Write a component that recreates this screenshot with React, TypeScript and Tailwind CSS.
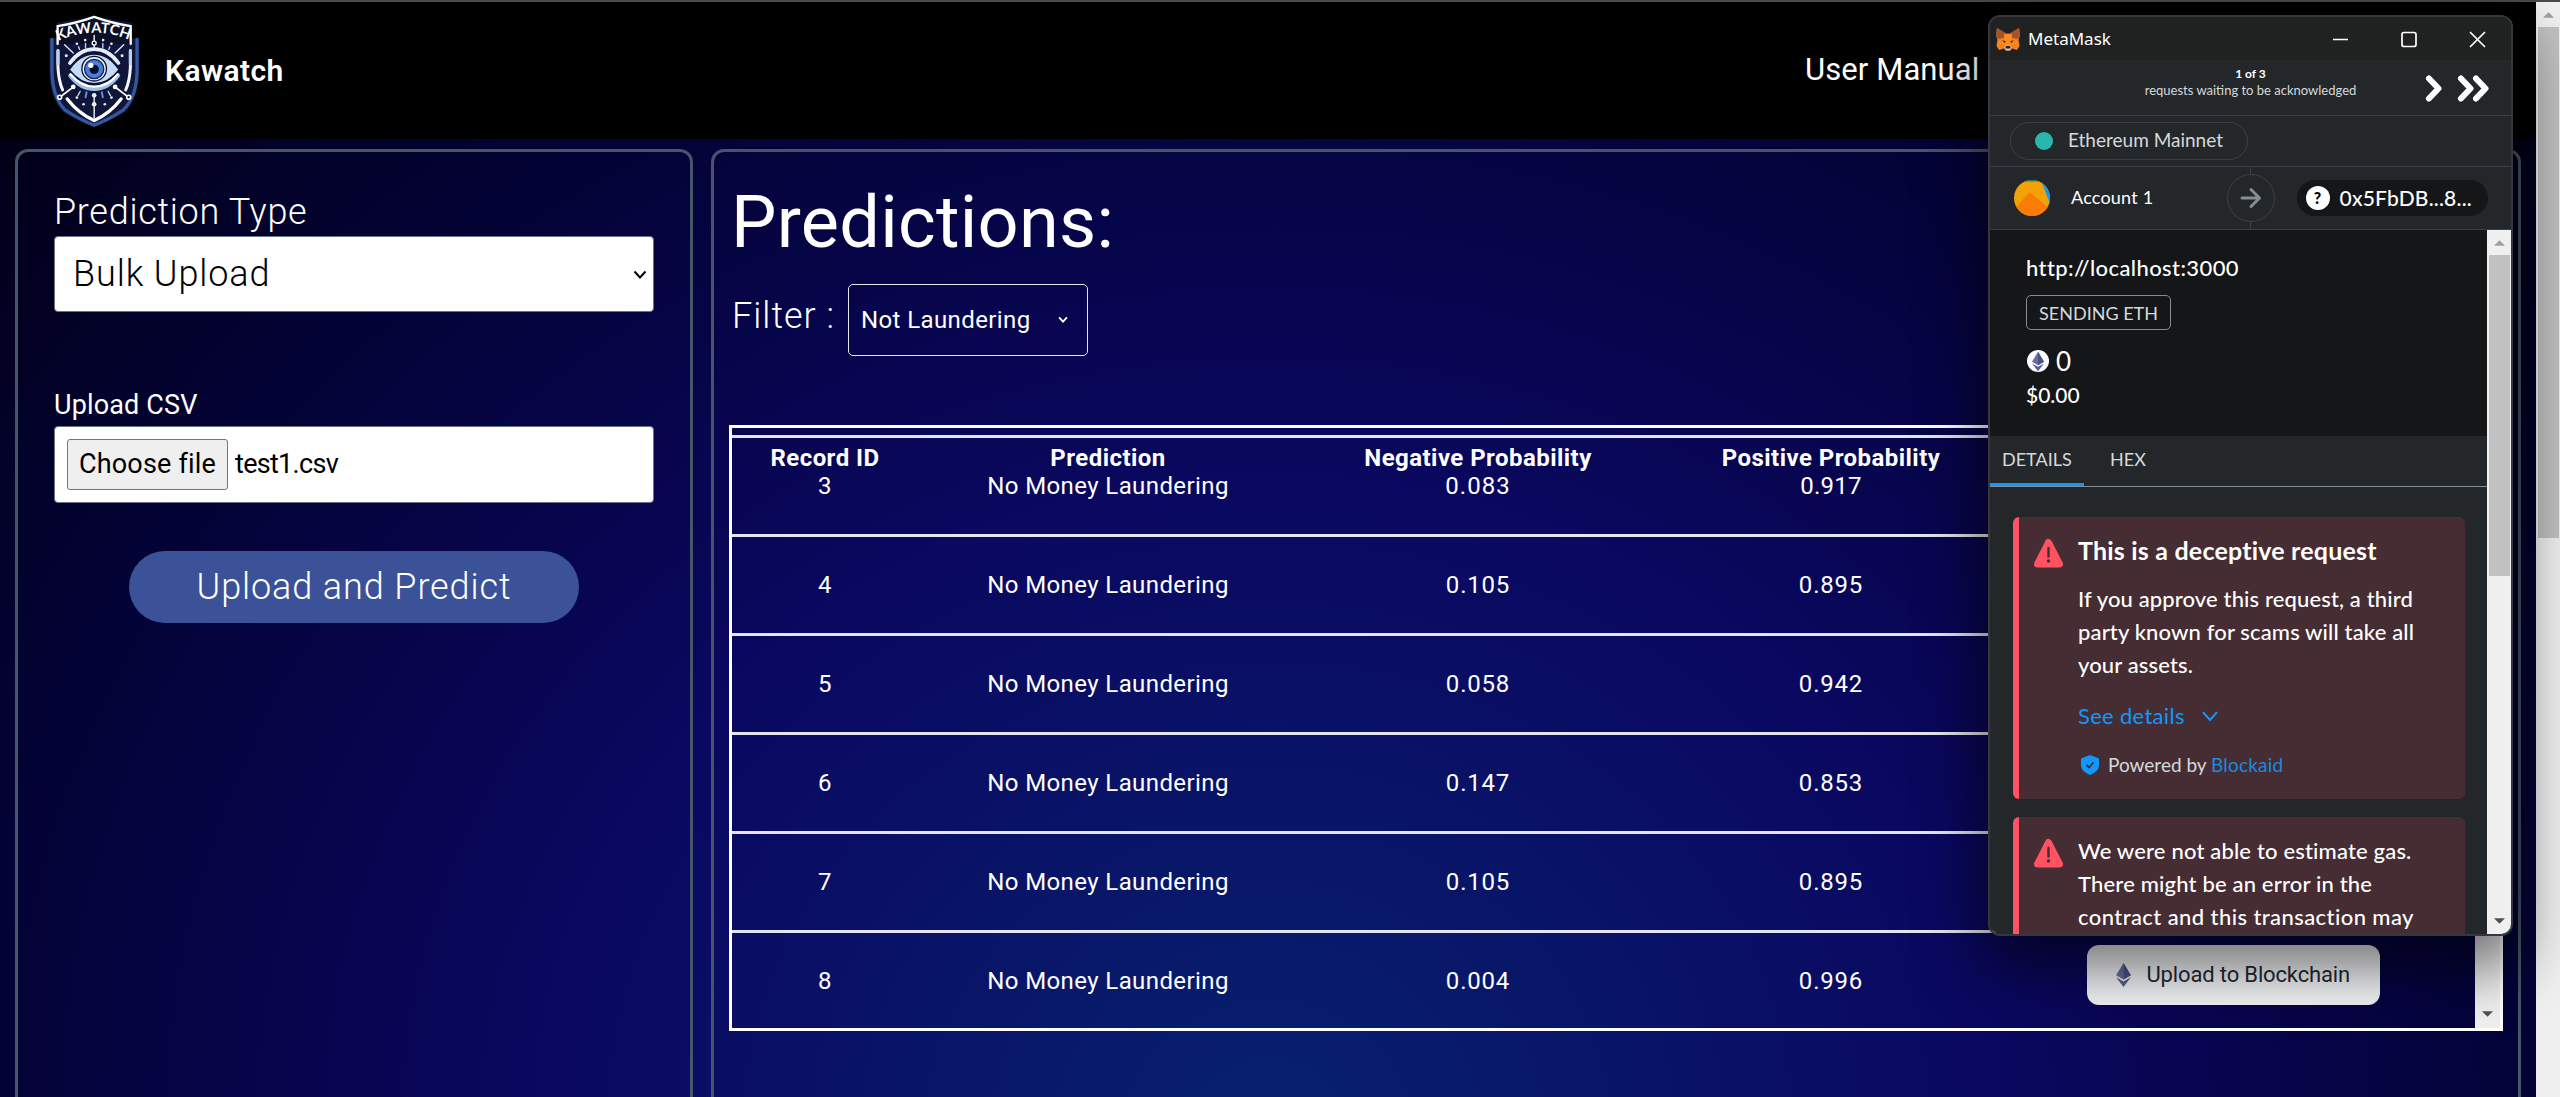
import React from "react";

const rows = [
  { id: 4, neg: "0.105", pos: "0.895" },
  { id: 5, neg: "0.058", pos: "0.942" },
  { id: 6, neg: "0.147", pos: "0.853" },
  { id: 7, neg: "0.105", pos: "0.895" },
  { id: 8, neg: "0.004", pos: "0.996" },
];

const cols = "grid grid-cols-[186px_380px_360px_346px_458px]";

function Logo() {
  return (
    <svg viewBox="54 40 280 342" className="h-[114px] w-[93px]" fill="none" strokeLinecap="round">
      <path d="M80 66 L193 46 L306 66 V112 H328 V215 Q326 296 285 335 Q235 364 193 378 Q150 364 101 335 Q60 296 58 215 V112 H80Z" fill="#10163a" />
      <path d="M66 116 V215 Q68 290 105 328 Q150 358 193 374 Q236 358 281 328 Q320 290 322 215 V116" stroke="#34579f" strokeWidth="10" />
      <path d="M84 150 V200 Q86 240 98 268 M302 150 V200 Q300 240 288 268" stroke="#f4f7ff" strokeWidth="9" />
      <path d="M84 150 V190 M302 150 V190" stroke="#b9d2f4" strokeWidth="9" />
      <path d="M112 295 Q145 338 193 360 Q241 338 274 295" stroke="#fff" strokeWidth="10" />
      <path d="M83 130 V76 Q140 67 193 48 Q246 67 303 76 V130" fill="#0b1026" stroke="#fff" strokeWidth="7" />
      <path d="M104 132 L130 157 M282 132 L256 157" stroke="#e7eefb" strokeWidth="4" />
      <path d="M193 104 V120 M193 134 V143 M193 290 V352" stroke="#fff" strokeWidth="4" />
      <circle cx="193" cy="127" r="6" stroke="#fff" strokeWidth="4" />
      <g fill="#e7eefb">
        <circle cx="166" cy="118" r="4" /><circle cx="220" cy="118" r="4" />
        <circle cx="141" cy="129" r="4" /><circle cx="245" cy="129" r="4" />
        <circle cx="109" cy="165" r="4.500" /><circle cx="277" cy="165" r="4.500" />
        <circle cx="193" cy="284" r="7" /><circle cx="193" cy="311" r="7" />
        <circle cx="161" cy="311" r="4" /><circle cx="225" cy="311" r="4" />
        <circle cx="141" cy="291" r="4" /><circle cx="245" cy="291" r="4" />
      </g>
      <path d="M167 128 V142 M219 128 V142 M146 138 L149 146 M240 138 L237 146 M144 285 L151 272 M242 285 L235 272" stroke="#c5d6f2" strokeWidth="4" />
      <path d="M170 275 L167 290 M216 275 L219 290" stroke="#5f8be0" strokeWidth="6" />
      <path d="M120 187 Q150 145 193 145 Q236 145 266 187" stroke="#e4edfb" strokeWidth="11" />
      <path d="M122 225 Q152 264 193 264 Q234 264 264 225" stroke="#9ebfee" strokeWidth="14" />
      <path d="M122 221 Q152 258 193 258 Q234 258 264 221" stroke="#fff" strokeWidth="7" />
      <path d="M118 207 Q150 160 193 160 Q236 160 268 207 Q236 249 193 249 Q150 249 118 207Z" fill="#c3daf8" stroke="#0c1230" strokeWidth="4" />
      <circle cx="193" cy="204" r="37" fill="#eaf2fd" stroke="#0c1230" strokeWidth="4" />
      <circle cx="193" cy="205" r="29" fill="#4c7dd8" stroke="#14235a" strokeWidth="4" />
      <circle cx="193" cy="206" r="14" fill="#0a1130" />
      <circle cx="183" cy="194" r="8" fill="#fff" />
      <path d="M91 289 L129 260 M295 289 L257 260" stroke="#fff" strokeWidth="5" />
      <circle cx="130" cy="259" r="7" fill="#fff" /><circle cx="256" cy="259" r="7" fill="#fff" />
      <circle cx="89" cy="290" r="6" fill="#10163a" stroke="#fff" strokeWidth="5" />
      <circle cx="297" cy="290" r="6" fill="#10163a" stroke="#fff" strokeWidth="5" />
      <path id="crest" d="M84 121 Q193 72 303 119" />
      <text fill="#fff" className="font-['Lato'] text-[44px] font-bold">
        <textPath href="#crest" textLength="220">KAWATCH</textPath>
      </text>
    </svg>
  );
}

function Fox() {
  return (
    <svg viewBox="0 0 24 24" className="h-6 w-6">
      <path d="M1 1 L10 6.500 H14 L23 1 L24 8 L22.500 13 L23.500 19 L21 23 L16 21.500 L13.500 23.500 H10.500 L8 21.500 L3 23 L.5 19 L1.500 13 L0 8Z" fill="#f0831f" />
      <path d="M1 1 L10 6.500 L8 11 L2 12 L0 8Z M23 1 L14 6.500 L16 11 L22 12 L24 8Z" fill="#a2532a" />
      <path d="M8 7 H16 L15 20 H9Z" fill="#fa8a22" />
      <path d="M1.500 14 L7 13 L8 18 L1 18.500Z M22.500 14 L17 13 L16 18 L23 18.500Z" fill="#f8861d" />
      <path d="M6 13.500 L9.500 14 L9 16Z M18 13.500 L14.500 14 L15 16Z" fill="#3b2a25" />
      <path d="M8 20 L10 18.500 H14 L16 20 L14.500 23.500 H9.500Z" fill="#d5c4b5" />
      <path d="M9.700 19 H14.300 L14.500 21.500 H9.500Z" fill="#2c2320" />
    </svg>
  );
}

function Diamond({ className }: { className: string }) {
  return (
    <svg viewBox="0 0 16 26" className={className}>
      <path d="M8 0 L16 13.300 L8 18 L0 13.300Z" fill="#6a6f9e" />
      <path d="M8 0 L16 13.300 L8 18Z" fill="#4c5285" />
      <path d="M0 15.500 L8 20 L16 15.500 L8 26Z" fill="#5a5f92" />
    </svg>
  );
}

function Warning() {
  return (
    <svg viewBox="0 0 29 30" className="h-[30px] w-[29px] shrink-0">
      <path d="M14.500 4.500 L25.500 26 H3.500Z" fill="#ff5263" stroke="#ff5263" strokeWidth="7" strokeLinejoin="round" />
      <path d="M14.500 10 V18.500" stroke="#462d33" strokeWidth="2.400" strokeLinecap="round" />
      <circle cx="14.500" cy="23" r="1.700" fill="#462d33" />
    </svg>
  );
}

function Chevron({ className }: { className: string }) {
  return (
    <svg viewBox="0 0 14 9" className={className} fill="none" stroke="currentColor">
      <path d="M1.500 1.500 L7 7.500 L12.500 1.500" />
    </svg>
  );
}

function Arrow({ down = false, className }: { down?: boolean; className: string }) {
  return (
    <svg viewBox="0 0 12 6" className={className}>
      <path d={down ? "M0 0 H12 L6 6Z" : "M0 6 H12 L6 0Z"} fill="currentColor" />
    </svg>
  );
}

function LeftPanel() {
  return (
    <section className="flex w-[678px] shrink-0 flex-col rounded-t-[13px] border-[3px] border-b-0 border-[#475569] px-9 pt-[30px]">
      <label className="h-[54px] text-4xl leading-[60px]! font-light tracking-[0.7px]">Prediction Type</label>
      <div className="flex h-[76px] items-center justify-between rounded-[4px] border border-[#6b7280] bg-white pr-[6px] pl-[18px] text-4xl font-light tracking-[0.9px] text-black">
        Bulk Upload
        <Chevron className="h-[9px] w-[14px] stroke-2" />
      </div>
      <label className="mt-[70px] h-11 text-[27px] leading-[46px] tracking-[0.15px]">Upload CSV</label>
      <div className="flex h-[77px] items-center rounded-[4px] border border-[#6b7280] bg-white pl-3 text-[27px] text-black">
        <span className="flex h-[51px] w-[161px] items-center justify-center rounded-[3px] border border-[#767676] bg-[#efefef] tracking-[0.2px]">
          Choose file
        </span>
        <span className="ml-[7px] tracking-[-0.7px]">test1.csv</span>
      </div>
      <button className="mt-12 flex h-[72px] w-[450px] items-center justify-center self-center rounded-full bg-[#3b5299] pb-[1px] text-4xl font-light tracking-[0.9px]">
        Upload and Predict
      </button>
    </section>
  );
}

function UploadButton() {
  return (
    <button className="-mt-[11px] flex h-[60px] w-[293px] items-center rounded-xl bg-[#f3f4f6] pl-[29px] text-[#1f2937]">
      <Diamond className="h-6 w-[15px]" />
      <span className="ml-[16px] text-[22px] tracking-[-0.15px]">Upload to Blockchain</span>
    </button>
  );
}

function RightPanel() {
  return (
    <section className="flex w-[1810px] shrink-0 flex-col rounded-t-[13px] border-[3px] border-b-0 border-[#475569] px-[15px] pt-[17px]">
      <h1 className="h-[108px] pl-[2px] text-[72px] leading-[108px] tracking-[0.3px]">Predictions:</h1>
      <div className="mt-[7px] flex h-[72px]">
        <span className="w-[119px] pl-[3px] text-4xl leading-[64px]! font-light tracking-[1px]">Filter :</span>
        <div className="flex w-60 items-center justify-between rounded-[5px] border-[1.5px] border-[#e5e7eb] pr-[19px] pl-[12px] pb-[1px] text-2xl tracking-[0.4px]">
          Not Laundering
          <Chevron className="h-[7px] w-[10px] stroke-[2.6]" />
        </div>
      </div>
      <div className="mt-[69px] flex h-[606px] border-[3px] border-white">
        <div className="w-[1743px] pt-[7px] text-2xl">
          <div className="h-[102px] border-y-[3px] border-[#e4e4ee] pt-[6px] text-center leading-[28px]!">
            <div className={`${cols} font-bold tracking-[0.45px] leading-7`}>
              <span>Record ID</span>
              <span>Prediction</span>
              <span>Negative Probability</span>
              <span>Positive Probability</span>
            </div>
            <div className={`${cols} tracking-[0.4px] leading-7`}>
              <span>3</span>
              <span>No Money Laundering</span>
              <span className="tracking-[1px]">0.083</span>
              <span className="tracking-[0.2px]">0.917</span>
            </div>
          </div>
          {rows.map((r) => (
            <div key={r.id} className={`${cols} h-[99px] items-center justify-items-center border-b-[3px] border-[#e4e4ee] tracking-[0.4px] last:border-b-0 last:pb-[4px]`}>
              <span>{r.id}</span>
              <span>No Money Laundering</span>
              <span className="tracking-[0.8px]">{r.neg}</span>
              <span className="tracking-[0.8px]">{r.pos}</span>
              <UploadButton />
            </div>
          ))}
        </div>
        <div className="flex w-[25px] flex-col items-center justify-end bg-[#f0f0f0] pb-[11px] text-[#505050]">
          <Arrow down className="h-[6px] w-[11px]" />
        </div>
      </div>
    </section>
  );
}

function WalletWindow() {
  return (
    <div className="absolute top-[15px] left-[1988px] flex h-[921px] w-[525px] flex-col overflow-hidden rounded-xl border-2 border-[#36363f] bg-[#24272a] bg-clip-padding font-['Lato'] text-white shadow-[0_24px_60px_8px_rgba(0,0,0,0.55)]">
      <div className="flex h-[43px] shrink-0 items-center bg-[#202221] pl-[6px]">
        <Fox />
        <span className="ml-2 grow font-['Noto_Sans'] text-[17px]">MetaMask</span>
        <svg viewBox="0 0 154 18" className="mr-[25px] h-[18px] w-[154px]" fill="none" stroke="#fff" strokeWidth="1.700">
          <path d="M1 9.500 H16 M138 2 L153 17 M153 2 L138 17" />
          <rect x="70" y="2.500" width="14" height="14" rx="2" />
        </svg>
      </div>
      <div className="grid h-14 shrink-0 grid-cols-[1fr_auto_1fr] border-b border-[#3b4046] text-center text-[13px]">
        <span />
        <div className="pt-[6px] leading-4">
          <p className="text-xs leading-4! font-bold">1 of 3</p>
          <p className="text-[#d6d9dc]">requests waiting to be acknowledged</p>
        </div>
        <svg viewBox="0 0 75 40" className="mt-2 mr-4 h-10 w-[75px] justify-self-end" fill="none" stroke="#fff" strokeWidth="6" strokeLinejoin="round" strokeLinecap="round">
          <path d="M9 10.500 L18.500 20.500 L9 30.500 M41 10.500 L50.500 20.500 L41 30.500 M56 10.500 L65.500 20.500 L56 30.500" />
        </svg>
      </div>
      <div className="flex h-[51px] shrink-0 items-center border-b border-[#3b4046] pl-5">
        <div className="flex h-[38px] w-[238px] items-center rounded-full border border-[#3b4046] pl-6 text-[19px] text-[#d6d9dc]">
          <span className="h-[18px] w-[18px] rounded-full bg-[#29b6af]" />
          <span className="ml-[15px] pb-[2px]">Ethereum Mainnet</span>
        </div>
      </div>
      <div className="grid h-[63px] shrink-0 grid-cols-[1fr_48px_1fr] items-center border-b border-[#3b4046]">
        <div className="flex items-center pl-6">
          <svg viewBox="0 0 36 36" className="h-9 w-9 rounded-full">
            <rect width="36" height="36" fill="#f3a205" />
            <path d="M10 0 H28 V1.500 H10Z" fill="#1c7a70" />
            <path d="M27 0 H36 V24Z" fill="#1598f2" />
            <path d="M16 12 L38 31 V36 H0 V29Z" fill="#fb7c04" />
          </svg>
          <span className="ml-[21px] pb-[2px] text-lg tracking-[0.2px]">Account 1</span>
        </div>
        <div className="flex flex-col items-center">
          <span className="h-[7px] w-px bg-[#3b4046]" />
          <div className="flex h-12 w-12 items-center justify-center rounded-full border border-[#3b4046]">
            <svg viewBox="0 0 22 22" className="h-[22px] w-[22px]" fill="none" stroke="#848c96" strokeWidth="3" strokeLinejoin="round" strokeLinecap="round">
              <path d="M2 11 H19.500 M11 2.500 L19.500 11 L11 19.500" />
            </svg>
          </div>
          <span className="h-[7px] w-px bg-[#3b4046]" />
        </div>
        <div className="ml-[22px] flex h-9 w-[191px] items-center rounded-full bg-[#141618] pl-[9px]">
          <span className="flex h-6 w-6 items-center justify-center rounded-full bg-white text-base font-black text-black">?</span>
          <span className="ml-[10px] pb-[1px] text-[21px] font-medium tracking-[0.2px]">0x5FbDB...8...</span>
        </div>
      </div>
      <div className="flex min-h-0 grow">
        <div className="w-[497px] overflow-hidden">
          <div className="h-[206px] bg-[#141618] pt-[21px] pl-9">
            <p className="text-[22px] leading-[33px] font-medium tracking-[0.4px]">http://localhost:3000</p>
            <span className="mt-[11px] flex h-[35px] w-[145px] items-center justify-center rounded-[5px] border border-[#848c96] text-lg text-[#d6d9dc]">
              SENDING ETH
            </span>
            <div className="mt-[15px] flex h-8 items-center text-[26px]">
              <span className="ml-[1px] flex h-[22px] w-[22px] items-center justify-center rounded-full bg-white">
                <Diamond className="h-[21px] w-[12px]" />
              </span>
              <span className="ml-[7px]">0</span>
            </div>
            <p className="mt-px text-[21px] leading-[33px] font-medium">$0.00</p>
          </div>
          <div className="flex h-[51px] border-b border-[#848c96] text-lg leading-[47px]! text-[#d6d9dc]">
            <span className="w-[94px] border-b-[3px] border-[#1098fc] pl-3 leading-[47px]">DETAILS</span>
            <span className="pl-[26px] leading-[47px]">HEX</span>
          </div>
          <div className="flex flex-col gap-[18px] pt-[30px] pl-[23px] text-[22px] leading-[33px]! font-medium">
            <div className="flex h-[282px] w-[452px] rounded-[6px] border-l-[6px] border-[#ff5263] bg-[#462d33] pl-[15px]">
              <div className="pt-[21px]"><Warning /></div>
              <div className="pt-[15px] pl-[15px] whitespace-nowrap">
                <p className="text-[25px] leading-9! font-bold tracking-[0.2px]">This is a deceptive request</p>
                <p className="mt-[14px] leading-[33px] tracking-[0.13px]">
                  If you approve this request, a third
                  <br />
                  <span className="tracking-[0.14px]">party known for scams will take all</span>
                  <br />
                  your assets.
                </p>
                <p className="mt-[18px] flex items-center leading-[33px] font-normal tracking-[0.3px] text-[#1098fc]">
                  See details
                  <Chevron className="ml-4 h-3 w-[18px] stroke-[1.6]" />
                </p>
                <p className="mt-[19px] flex items-center text-[19px] leading-7! font-normal text-[#d6d9dc]">
                  <svg viewBox="0 0 18 20" className="mr-[9px] ml-[3px] h-5 w-[18px]">
                    <path d="M9 0 L18 3.500 V11 Q17 17 9 20 Q1 17 0 11 V3.500Z" fill="#1098fc" />
                    <path d="M5.500 10 L8 12.500 L12.500 7.500" fill="none" stroke="#462d33" strokeWidth="1.800" />
                  </svg>
                  Powered by&nbsp;<span className="tracking-[0.2px] text-[#1a8ae0]">Blockaid</span>
                </p>
              </div>
            </div>
            <div className="flex h-[200px] w-[452px] shrink-0 rounded-[6px] border-l-[6px] border-[#ff5263] bg-[#462d33] pl-[15px]">
              <div className="pt-[21px]"><Warning /></div>
              <p className="pt-[17px] pl-[15px] leading-[33px] tracking-[0.17px] whitespace-nowrap">
                We were not able to estimate gas.
                <br />
                There might be an error in the
                <br />
                <span className="tracking-[0.42px]">contract and this transaction may</span>
              </p>
            </div>
          </div>
        </div>
        <div className="flex w-6 flex-col items-center bg-[#f0f0f0] pt-[10px] pb-[10px]">
          <Arrow className="h-[6px] w-[11px] text-[#a0a0a0]" />
          <span className="mt-[9px] h-[321px] w-[21px] bg-[#c1c1c1]" />
          <Arrow down className="mt-auto h-[6px] w-[11px] text-[#505050]" />
        </div>
      </div>
    </div>
  );
}

export default function App() {
  return (
    <div className="relative flex h-[1097px] w-[2560px] flex-col overflow-hidden bg-black font-['Roboto',sans-serif] text-white">
      <div className="h-[2px] shrink-0 bg-[#4a4a4a]" />
      <div className="flex min-h-0 grow">
        <main className="flex w-[2536px] flex-col bg-[radial-gradient(1793px_1595px_at_1268px_1126px,#07216f_0%,#0a0860_40%,#07054c_55%,#040338_70%,#010018_94%)]">
          <header className="flex h-[137px] shrink-0 items-center bg-black pl-12">
            <Logo />
            <span className="ml-[24px] w-[118px] text-[30px] font-semibold whitespace-nowrap tracking-[0.4px]">Kawatch</span>
            <span className="ml-[1522px] text-[31px] whitespace-nowrap tracking-[0.1px]">User Manual</span>
          </header>
          <div className="flex grow gap-[18px] pt-[10px] pl-[15px]">
            <LeftPanel />
            <RightPanel />
          </div>
        </main>
        <div className="flex w-6 flex-col items-center bg-[#f0f0f0] pt-[10px] text-[#a0a0a0]">
          <Arrow className="h-[6px] w-[11px]" />
          <span className="mt-[9px] h-[511px] w-[21px] bg-[#c1c1c1]" />
        </div>
      </div>
      <WalletWindow />
    </div>
  );
}
